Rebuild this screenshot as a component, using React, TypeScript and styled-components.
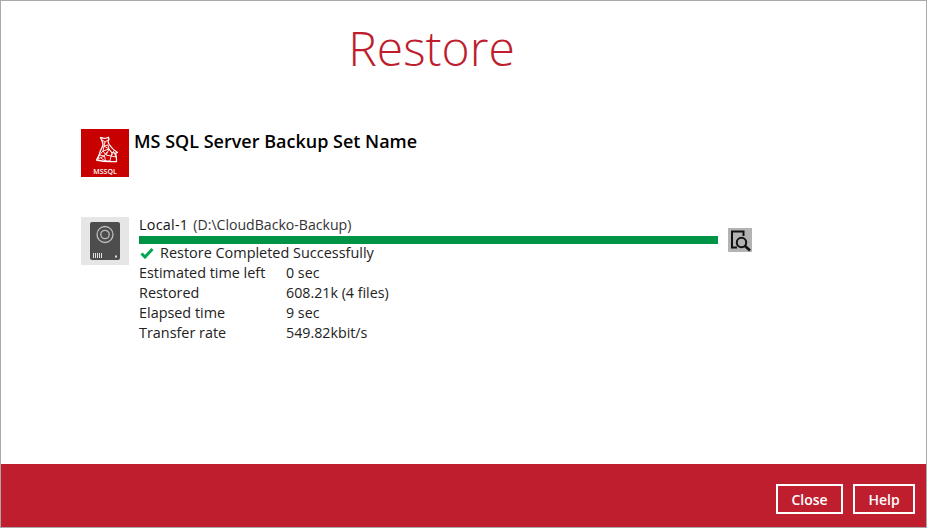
import styled, { createGlobalStyle } from 'styled-components';

const GlobalStyle = createGlobalStyle`
  html, body {
    margin: 0;
    padding: 0;
    background: #fff;
  }
  body {
    font-family: 'Open Sans', 'Liberation Sans', sans-serif;
  }
`;

const Frame = styled.div`
  box-sizing: border-box;
  width: 927px;
  height: 528px;
  border: 1px solid #a9a9a9;
  display: flex;
  flex-direction: column;
  color: #222;
`;

const Main = styled.main`
  flex: 1;
  padding: 0 80px;
`;

const Title = styled.h1`
  margin: 0;
  padding: 15px 64px 0 0;
  height: 128px;
  box-sizing: border-box;
  text-align: center;
  font-size: 48px;
  line-height: 63px;
  font-weight: 300;
  color: #be1e2d;
`;

const BackupSet = styled.div`
  display: flex;
  gap: 5px;
  height: 88px;
`;

const Heading = styled.h2`
  margin: 0;
  font-size: 18px;
  line-height: 25px;
  font-weight: 600;
  color: #000;
`;

const Destination = styled.div`
  display: flex;
  align-items: flex-start;
`;

const DriveTile = styled.div`
  width: 48px;
  height: 48px;
  flex: none;
  background: #e6e6e6;
  display: flex;
  align-items: center;
  justify-content: center;
`;

const Details = styled.div`
  width: 579px;
  margin-left: 10px;
  font-size: 14.4px;
  line-height: 20px;
`;

const NameLine = styled.div`
  height: 19px;
  line-height: 16px;
`;

const Name = styled.span`
  color: #111;
  font-weight: 500;
  letter-spacing: 0.25px;
`;

const Path = styled.span`
  margin-left: 5px;
  font-size: 14.1px;
  color: #333;
`;

const Track = styled.div`
  height: 8px;
  background: #009245;
`;

const Status = styled.div`
  box-sizing: border-box;
  display: flex;
  align-items: center;
  gap: 6px;
  height: 19px;
  padding: 0 0 2px 1px;
  font-size: 14.45px;
`;

const Stat = styled.div`
  display: grid;
  grid-template-columns: 147px 1fr;
`;

const StatValue = styled.span`
  font-size: 14.25px;
`;

const Inspect = styled.button`
  width: 24px;
  height: 24px;
  flex: none;
  margin: 11px 0 0 10px;
  padding: 0;
  border: none;
  background: #b3b3b3;
  display: flex;
  align-items: center;
  justify-content: center;
`;

const Footer = styled.footer`
  box-sizing: border-box;
  height: 63px;
  flex: none;
  background: #be1e2d;
  display: flex;
  align-items: flex-end;
  justify-content: flex-end;
  gap: 10px;
  padding: 0 11px 13px 0;
`;

const FooterButton = styled.button<{ $width: number }>`
  box-sizing: border-box;
  width: ${(p) => p.$width}px;
  height: 30px;
  border: 2px solid #fff;
  background: transparent;
  color: #fff;
  font-family: inherit;
  font-size: 14px;
  font-weight: 600;
  padding: 0;
`;

function MssqlLogo() {
  return (
    <svg width="48" height="48" viewBox="0 0 48 48" style={{ flex: 'none' }}>
      <rect width="48" height="48" fill="#c80000" />
      <g fill="none" stroke="#fff" strokeLinejoin="round">
        <path
          d="M19.500 8.500c2.500.8 5 1.800 8-.2l.5 2.200c-1.500 1.500-1 3 .2 5 1.800 2.800 5 6 8.300 8l-2 .7c.8 2.500 1.300 5 1 8.300-6.500.5-13.500.2-20-1.500 1.500-2.500 3-5 3.500-8 .5-2.500 2.500-4.500 3-7 .2-2.500-1.500-5-2.500-7.500z"
          strokeWidth="1.300"
        />
        <path
          d="M21 11l3 2 3-2M24 13l-1 4 4-1 1 4-5-3-1 5 6-2 3 4 3-3M22 22l3 4 3-6M18.500 26l3.500-4M18.500 26l5 1 1 5M25 26l5 1 3-4M30 27l-1 5M30 27l5 1M18.500 26l-2 4 7-3M29 32l-5 0M20 29l4 3M26 23l-3 4M31 24l-1 3M33 23l2 5M28 20l3 4"
          strokeWidth="0.900"
        />
      </g>
      <text x="24" y="44.500" textAnchor="middle" fill="#fff" fontSize="7" fontWeight="600" fontFamily="'Open Sans', sans-serif">MSSQL</text>
    </svg>
  );
}

function DriveIcon() {
  return (
    <svg width="30" height="38" viewBox="0 0 30 38">
      <rect width="30" height="38" rx="2" fill="#4d4d4d" />
      <circle cx="15" cy="12.500" r="8" fill="none" stroke="#bdbdbd" strokeWidth="1.300" />
      <circle cx="15" cy="12.500" r="4.200" fill="none" stroke="#bdbdbd" strokeWidth="1.300" />
      <path d="M3.500 31v5M5.500 31v5M7.500 31v5M9.500 31v5M11.500 31v5" stroke="#e0e0e0" strokeWidth="1" />
      <rect x="25" y="33.500" width="2" height="2" fill="#e0e0e0" />
    </svg>
  );
}

function InspectIcon() {
  return (
    <svg width="24" height="24" viewBox="0 0 24 24">
      <path d="M9 19.500H4V3.500h11.500V8" fill="none" stroke="#111" strokeWidth="2" />
      <circle cx="13.500" cy="14.500" r="4.700" fill="none" stroke="#111" strokeWidth="2" />
      <path d="M17 18l5 4.500" stroke="#111" strokeWidth="2.600" />
    </svg>
  );
}

function CheckIcon() {
  return (
    <svg width="14" height="12" viewBox="0 0 14 12">
      <path d="M1.500 6.500l3.500 3.500L12.500 2" fill="none" stroke="#00a651" strokeWidth="3" />
    </svg>
  );
}

const stats = [
  ['Estimated time left', '0 sec'],
  ['Restored', '608.21k (4 files)'],
  ['Elapsed time', '9 sec'],
  ['Transfer rate', '549.82kbit/s'],
];

export default function App() {
  return (
    <Frame>
      <GlobalStyle />
      <Main>
        <Title>Restore</Title>
        <BackupSet>
          <MssqlLogo />
          <Heading>MS SQL Server Backup Set Name</Heading>
        </BackupSet>
        <Destination>
          <DriveTile>
            <DriveIcon />
          </DriveTile>
          <Details>
            <NameLine>
              <Name>Local-1</Name>
              <Path>(D:\CloudBacko-Backup)</Path>
            </NameLine>
            <Track />
            <Status>
              <CheckIcon />
              Restore Completed Successfully
            </Status>
            {stats.map(([label, value]) => (
              <Stat key={label}>
                <span>{label}</span>
                <StatValue>{value}</StatValue>
              </Stat>
            ))}
          </Details>
          <Inspect aria-label="Inspect">
            <InspectIcon />
          </Inspect>
        </Destination>
      </Main>
      <Footer>
        <FooterButton $width={67}>Close</FooterButton>
        <FooterButton $width={62}>Help</FooterButton>
      </Footer>
    </Frame>
  );
}
